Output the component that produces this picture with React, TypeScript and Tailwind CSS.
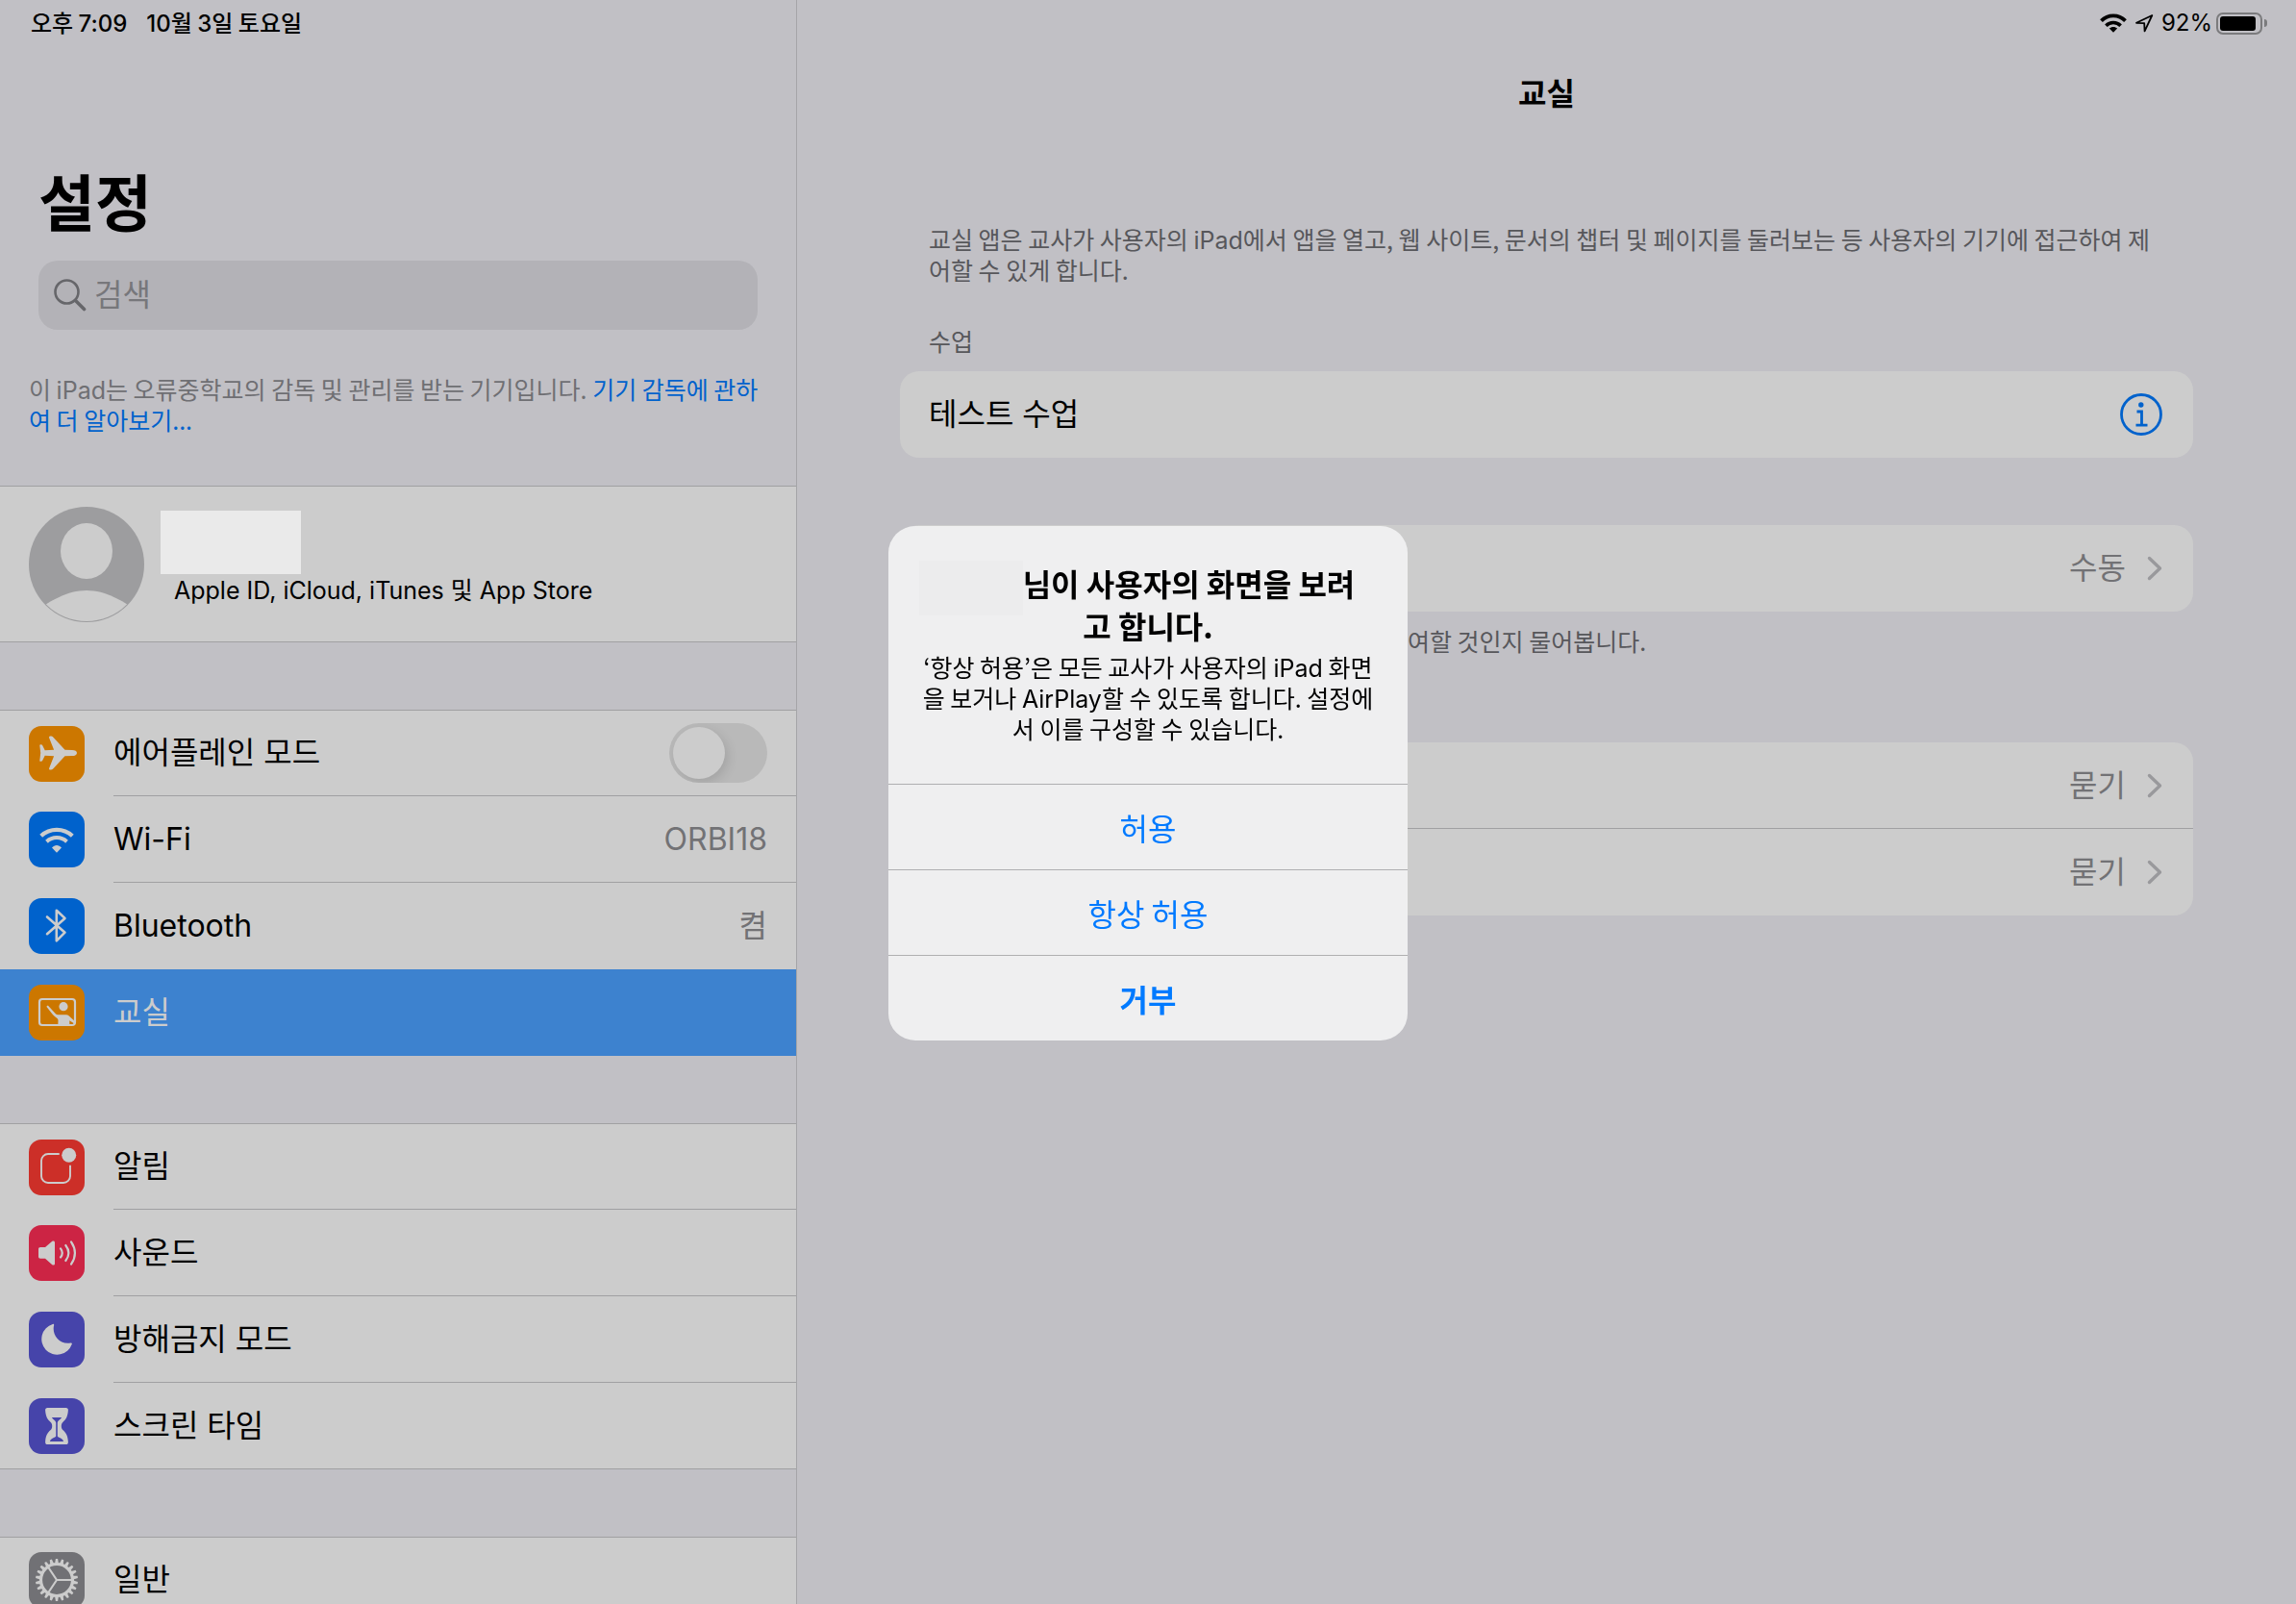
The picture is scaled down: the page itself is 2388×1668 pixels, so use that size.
import type { ReactNode } from 'react';

const TEETH = Array.from({ length: 22 }, (_, i) => (i * 360) / 22);

function PlaneIcon() {
  return (
    <path
      fill="#ccc"
      d="M50 28c0 2-2 3.1-5 3.1l-7.5.1L25.2 44.6c-1.3 1.4-4.8 1.3-4.1-.6l5-12.8-9.4-.4-2.6 5.3c-.5 1-2.8.9-2.8-.2l.9-7.9-.9-7.9c0-1.1 2.3-1.2 2.8-.2l2.6 5.3 9.4-.4-5-12.6c-.7-2 2.8-2 4.1-.6l12.3 13.2 7.5.1c3 0 5 1.1 5 3.1Z"
    />
  );
}

function WifiTileIcon() {
  return (
    <g fill="none" stroke="#ccc">
      <path strokeWidth="4.2" d="M12.7 25.2a24 24 0 0 1 32.600 0" />
      <path strokeWidth="4" d="M18.5 31.2a15.500 15.500 0 0 1 21 0" />
      <path fill="#ccc" stroke="none" d="M29 42.7 24 37.500c2.800-3.400 7.200-3.400 10 0Z" />
    </g>
  );
}

function BluetoothIcon() {
  return (
    <path
      fill="none"
      stroke="#ccc"
      strokeWidth="2.6"
      strokeLinecap="round"
      strokeLinejoin="round"
      d="m19 19.500 18.500 16.200-8.700 8.600V12.700l8.700 8.200L19 37.200"
    />
  );
}

function ClassroomIcon() {
  return (
    <>
      <rect x="11" y="15" width="37" height="27" rx="3" fill="none" stroke="#ccc" strokeWidth="2.2" />
      <circle cx="36" cy="22.7" r="4.6" fill="#ccc" />
      <path
        fill="#ccc"
        d="M18.700 23.300c-.6-1.400.9-2.200 1.800-1.100l7.600 8.300c.6.5 1.200.7 2 .7H39c1 0 1.700.3 2.500 1l5.500 5V42H30.300l.2-4.700c0-1-.3-1.700-1-2.400-2.300-1.700-4.200-3.500-5.500-5Z"
      />
      <path fill="#cc7700" d="m42.300 37.200 4.300 2.700-1 1.100h-3.300Z" />
    </>
  );
}

function NotificationIcon() {
  return (
    <>
      <path
        fill="none"
        stroke="#ccc"
        strokeWidth="1.9"
        d="M31.700 15H20a7 7 0 0 0-7 7v16a7 7 0 0 0 7 7h16a7 7 0 0 0 7-7V26.700"
      />
      <circle cx="41.7" cy="16.3" r="7.5" fill="#ccc" />
    </>
  );
}

function SoundIcon() {
  return (
    <>
      <path
        fill="#ccc"
        d="M12 23h5l7.300-6.200c1.300-.9 2.700-.3 2.700 1.200v22c0 1.500-1.400 2-2.700 1.200L17 34.700h-5c-1.300 0-2-.8-2-2v-7.700c0-1.300.7-2 2-2Z"
      />
      <g fill="none" stroke="#ccc" strokeWidth="2.2" strokeLinecap="round">
        <path d="M33 24.300c2.300 3 2.300 6.200 0 9.200" />
        <path d="M38.300 21c4 5.200 4 10.800 0 16" />
        <path d="M44 17.300c5.200 7.700 5.200 15.700 0 23.400" />
      </g>
    </>
  );
}

function MoonIcon() {
  return (
    <path
      fill="#ccc"
      d="M24.800 13c.9-.4 1.600.2 1.300 1.200-2.300 9.300 5 20.300 17.300 18.300 1.200-.2 1.800.5 1.300 1.500A16.200 16.200 0 1 1 24.800 13Z"
    />
  );
}

function HourglassIcon() {
  return (
    <>
      <path
        fill="#ccc"
        d="M19.500 10h19c1.700 0 2.500 1 2.400 2.600-.4 6.600-2.300 9.600-5.600 12.400-2 1.700-2 6.200 0 8 3.300 2.800 5.200 5.800 5.600 12.400.1 1.600-.7 2.600-2.400 2.600h-19c-1.700 0-2.500-1-2.400-2.600.4-6.600 2.300-9.600 5.600-12.400 2-1.800 2-6.300 0-8-3.300-2.800-5.200-5.800-5.600-12.400-.1-1.600.7-2.600 2.400-2.600Z"
      />
      <path
        fill="#4644aa"
        d="M24 20h10c-.5 2-4 3-4.200 5.500v14c.3 1.300 6.200 2.300 6.200 5.500H22c0-3.200 5.900-4.200 6.200-5.500v-14c-.2-2.500-3.700-3.500-4.200-5.500Z"
      />
    </>
  );
}

function GearIcon() {
  return (
    <>
      <circle cx="29" cy="29" r="16.5" fill="none" stroke="#ccc" strokeWidth="3.2" />
      {TEETH.map((angle) => (
        <path key={angle} fill="#ccc" d="m27 12.500.9-5.500h2.200l.9 5.500Z" transform={`rotate(${angle} 29 29)`} />
      ))}
      <path fill="none" stroke="#ccc" strokeWidth="2.2" d="M45 29H29l-9-13.500M29 29l-9 13.500" />
    </>
  );
}

function Tile({ color, children }: { color: string; children: ReactNode }) {
  return (
    <span className={`size-[58px] shrink-0 overflow-hidden rounded-[13px] ${color}`}>
      <svg viewBox="0 0 58 58" className="size-full" aria-hidden="true">
        {children}
      </svg>
    </span>
  );
}

function Latin({ children }: { children: ReactNode }) {
  return <span className="font-[Inter,sans-serif] leading-none">{children}</span>;
}

type Item = { label: string; color: string; icon: ReactNode; value?: string; toggle?: boolean; active?: boolean };

const groups: Item[][] = [
  [
    { label: '에어플레인 모드', color: 'bg-[#cc7700]', icon: <PlaneIcon />, toggle: true },
    { label: 'Wi-Fi', color: 'bg-[#0062cc]', icon: <WifiTileIcon />, value: 'ORBI18' },
    { label: 'Bluetooth', color: 'bg-[#0062cc]', icon: <BluetoothIcon />, value: '켬' },
    { label: '교실', color: 'bg-[#cc7700]', icon: <ClassroomIcon />, active: true },
  ],
  [
    { label: '알림', color: 'bg-[#cc2f28]', icon: <NotificationIcon /> },
    { label: '사운드', color: 'bg-[#cc2444]', icon: <SoundIcon /> },
    { label: '방해금지 모드', color: 'bg-[#4644aa]', icon: <MoonIcon /> },
    { label: '스크린 타임', color: 'bg-[#4644aa]', icon: <HourglassIcon /> },
  ],
  [{ label: '일반', color: 'bg-[#717175]', icon: <GearIcon /> }],
];

function SettingsRow({ item, last }: { item: Item; last: boolean }) {
  const shell = `flex h-full w-full items-center pl-[30px] text-left text-[32px] ${
    item.active ? 'bg-[#3d82cf] text-[#ccc]' : 'bg-[#ccc] text-black'
  } ${last && !item.active ? 'border-b border-[#a0a0a2]' : ''}`;
  const body = `ml-[30px] flex h-full min-w-0 flex-1 items-center justify-between pr-[30px] ${
    last || item.label === 'Bluetooth' ? '' : 'border-b border-[#a0a0a2]'
  }`;
  if (item.toggle) {
    return (
      <label className={shell}>
        <Tile color={item.color}>{item.icon}</Tile>
        <span className={body}>
          <span>{item.label}</span>
          <input
            type="checkbox"
            role="switch"
            className="h-[62px] w-[102px] appearance-none overflow-hidden rounded-full bg-[#b9b9b9] p-1 before:block before:size-[54px] before:rounded-full before:bg-[#ccc] before:shadow-[3px_4px_12px_rgba(0,0,0,0.12)]"
          />
        </span>
      </label>
    );
  }
  return (
    <button type="button" className={shell}>
      <Tile color={item.color}>{item.icon}</Tile>
      <span className={body}>
        <span>{item.label}</span>
        {item.value && <span className="text-[#727275]">{item.value}</span>}
      </span>
    </button>
  );
}

function Sidebar() {
  return (
    <aside className="flex w-[829px] shrink-0 flex-col overflow-hidden border-r border-[#a5a5a8]">
      <div className="flex h-[46px] shrink-0 items-center gap-[20px] pl-8 font-['Noto_Sans_CJK_KR',sans-serif] text-[24px] font-medium">
        <span>
          오후 <Latin>7:09</Latin>
        </span>
        <span>
          <Latin>10</Latin>월 <Latin>3</Latin>일 토요일
        </span>
      </div>
      <h1 className="mt-[126px] pl-10 text-[64px] leading-[80px] font-bold">설정</h1>
      <label className="mx-10 mt-[19px] flex h-[72px] shrink-0 items-center gap-2 rounded-[20px] bg-[#b3b2b7] pl-4">
        <svg viewBox="0 0 34 34" className="size-[34px] shrink-0" fill="none" stroke="#66666a" aria-hidden="true">
          <circle cx="13.5" cy="13.5" r="12" strokeWidth="2.6" />
          <path d="m22.500 22.500 9 9" strokeWidth="3.6" strokeLinecap="round" />
        </svg>
        <input
          type="search"
          aria-label="검색"
          placeholder="검색"
          className="h-10 min-w-0 flex-1 bg-transparent text-[32px] leading-10 outline-none placeholder:text-[#77777b]"
        />
      </label>
      <p className="mt-[45px] px-[30px] font-['Noto_Sans_CJK_KR',sans-serif] text-[25px] leading-8 text-[#6f6f73]">
        이 <Latin>iPad</Latin>는 오류중학교의 감독 및 관리를 받는 기기입니다.{' '}
        <a href="#supervision" className="text-[#0062cc]">
          기기 감독에 관하여 더 알아보기...
        </a>
      </p>
      <button
        type="button"
        className="mt-[53px] flex h-[163px] shrink-0 items-center border-y border-[#a0a0a2] bg-[#ccc] pl-[30px] text-left"
      >
        <svg viewBox="0 0 120 120" className="size-[120px] shrink-0" aria-hidden="true">
          <defs>
            <clipPath id="avatar">
              <circle cx="60" cy="60" r="59" />
            </clipPath>
          </defs>
          <circle cx="60" cy="60" r="60" fill="#9d9d9f" />
          <g clipPath="url(#avatar)" fill="#ccc">
            <ellipse cx="60" cy="46" rx="27" ry="29" />
            <path d="M10 107c12-9 30-20 50-20s38 11 50 20v14H10Z" />
          </g>
        </svg>
        <span className="ml-[17px] flex flex-col pb-3">
          <span className="h-[66px] w-[146px] bg-[#eaeaea]" />
          <span className="pl-[14px] text-[25px] leading-[34px]">Apple ID, iCloud, iTunes 및 App Store</span>
        </span>
      </button>
      {groups.map((items) => (
        <ul key={items[0].label} className="mt-[70px] shrink-0 *:first:border-t *:first:border-[#a0a0a2]">
          {items.map((item, i) => (
            <li key={item.label} className="h-[90px]">
              <SettingsRow item={item} last={i === items.length - 1} />
            </li>
          ))}
        </ul>
      ))}
    </aside>
  );
}

function StatusIcons() {
  return (
    <div className="flex h-12 items-center justify-end pr-[30px]">
      <svg viewBox="0 0 28 20" className="h-5 w-7" fill="none" stroke="#000" aria-hidden="true">
        <path strokeWidth="3.8" d="M1.500 7.700a17.500 17.500 0 0 1 25 0" />
        <path strokeWidth="3.6" d="M6.400 12.700a10.700 10.700 0 0 1 15.200 0" />
        <path fill="#000" stroke="none" d="m14 19.800-4.200-4.200c2.400-2.100 6-2.100 8.400 0Z" />
      </svg>
      <svg viewBox="0 0 20 20" className="ml-2 size-5" fill="none" stroke="#000" strokeWidth="1.8" strokeLinejoin="round" aria-hidden="true">
        <path d="M18.300 2 2 9.800l8.200.4.400 8.200Z" />
      </svg>
      <span className="ml-2 text-[24px]">92%</span>
      <span className="ml-1 h-[23px] w-12 rounded-[7px] border-2 border-[#7b7b7d] p-[2px]">
        <span className="block h-full w-[37px] rounded-[3px] bg-black" />
      </span>
      <span className="ml-[2px] h-2 w-[3px] rounded-r-full bg-[#7b7b7d]" />
    </div>
  );
}

function ValueRow({ value, divided }: { value: string; divided?: boolean }) {
  return (
    <button
      type="button"
      className={`flex h-[90px] w-full items-center justify-end gap-[22px] pr-8 text-[32px] text-[#727275] ${
        divided ? 'border-b border-[#a0a0a2]' : ''
      }`}
    >
      {value}
      <svg viewBox="0 0 16 26" className="h-[26px] w-4" fill="none" stroke="#99999c" strokeWidth="3.4" strokeLinecap="round" strokeLinejoin="round" aria-hidden="true">
        <path d="m2.500 2.500 11 10.500-11 10.500" />
      </svg>
    </button>
  );
}

function Detail() {
  return (
    <main className="min-w-0 flex-1">
      <StatusIcons />
      <h2 className="flex h-[100px] items-center justify-center text-[32px] font-semibold">교실</h2>
      <div className="mx-[107px] pt-[84px]">
        <p className="px-[30px] font-['Noto_Sans_CJK_KR',sans-serif] text-[25px] leading-8 text-[#57575b]">
          교실 앱은 교사가 사용자의 <Latin>iPad</Latin>에서 앱을 열고, 웹 사이트, 문서의 챕터 및 페이지를 둘러보는 등 사용자의 기기에 접근하여 제어할 수 있게 합니다.
        </p>
        <h3 className="mt-[44px] px-[30px] text-[25px] leading-8 text-[#57575b]">수업</h3>
        <div className="mt-[14px] flex h-[90px] items-center justify-between rounded-[20px] bg-[#ccc] pr-8 pl-[30px] text-[32px]">
          <span>테스트 수업</span>
          <button type="button" aria-label="테스트 수업">
            <svg viewBox="0 0 44 44" className="size-11" fill="none" stroke="#0062cc" aria-hidden="true">
              <circle cx="22" cy="22" r="20.5" strokeWidth="2.8" />
              <circle cx="21.8" cy="12" r="2.7" fill="#0062cc" stroke="none" />
              <path d="M17.500 19h5v14M16.500 33.200h12" strokeWidth="2.8" />
            </svg>
          </button>
        </div>
        <div className="mt-[70px] overflow-hidden rounded-[20px] bg-[#ccc]">
          <ValueRow value="수동" />
        </div>
        <p className="mt-[14px] pl-[505px] font-['Noto_Sans_CJK_KR',sans-serif] text-[25px] leading-8 text-[#57575b]">참여할 것인지 물어봅니다.</p>
        <div className="mt-[90px] overflow-hidden rounded-[20px] bg-[#ccc]">
          <ValueRow value="묻기" divided />
          <ValueRow value="묻기" />
        </div>
      </div>
    </main>
  );
}

function Alert() {
  return (
    <div className="fixed inset-0 flex items-center justify-center pb-10">
      <div
        role="alertdialog"
        aria-labelledby="alert-title"
        aria-describedby="alert-text"
        className="w-[540px] overflow-hidden rounded-[28px] bg-[#efeff0] text-center font-['Noto_Sans_CJK_KR',sans-serif]"
      >
        <div className="px-8 pt-[37px] pb-[42px]">
          <h2 id="alert-title" className="px-3 text-[32px] leading-[44px] font-semibold">
            <span className="relative inline-block h-6 w-[85px]">
              <span className="absolute right-0 -bottom-5 h-[57px] w-[108px] bg-[#ececed]" />
            </span>
            님이 사용자의 화면을 보려고 합니다.
          </h2>
          <p id="alert-text" className="mt-[5px] text-[25px] leading-8">
            ‘항상 허용’은 모든 교사가 사용자의 <Latin>iPad</Latin> 화면을 보거나 <Latin>AirPlay</Latin>할 수 있도록 합니다. 설정에서 이를 구성할 수 있습니다.
          </p>
        </div>
        <div className="flex flex-col text-[32px] text-[#007aff]">
          <button type="button" className="h-[89px] border-t border-[#afafb1]">허용</button>
          <button type="button" className="h-[89px] border-t border-[#afafb1]">항상 허용</button>
          <button type="button" className="h-[89px] border-t border-[#afafb1] font-semibold">거부</button>
        </div>
      </div>
    </div>
  );
}

export default function App() {
  return (
    <div className="flex h-screen overflow-hidden bg-[#c1c0c5] font-[Inter,'Noto_Sans_CJK_KR',sans-serif] text-black">
      <Sidebar />
      <Detail />
      <Alert />
    </div>
  );
}
